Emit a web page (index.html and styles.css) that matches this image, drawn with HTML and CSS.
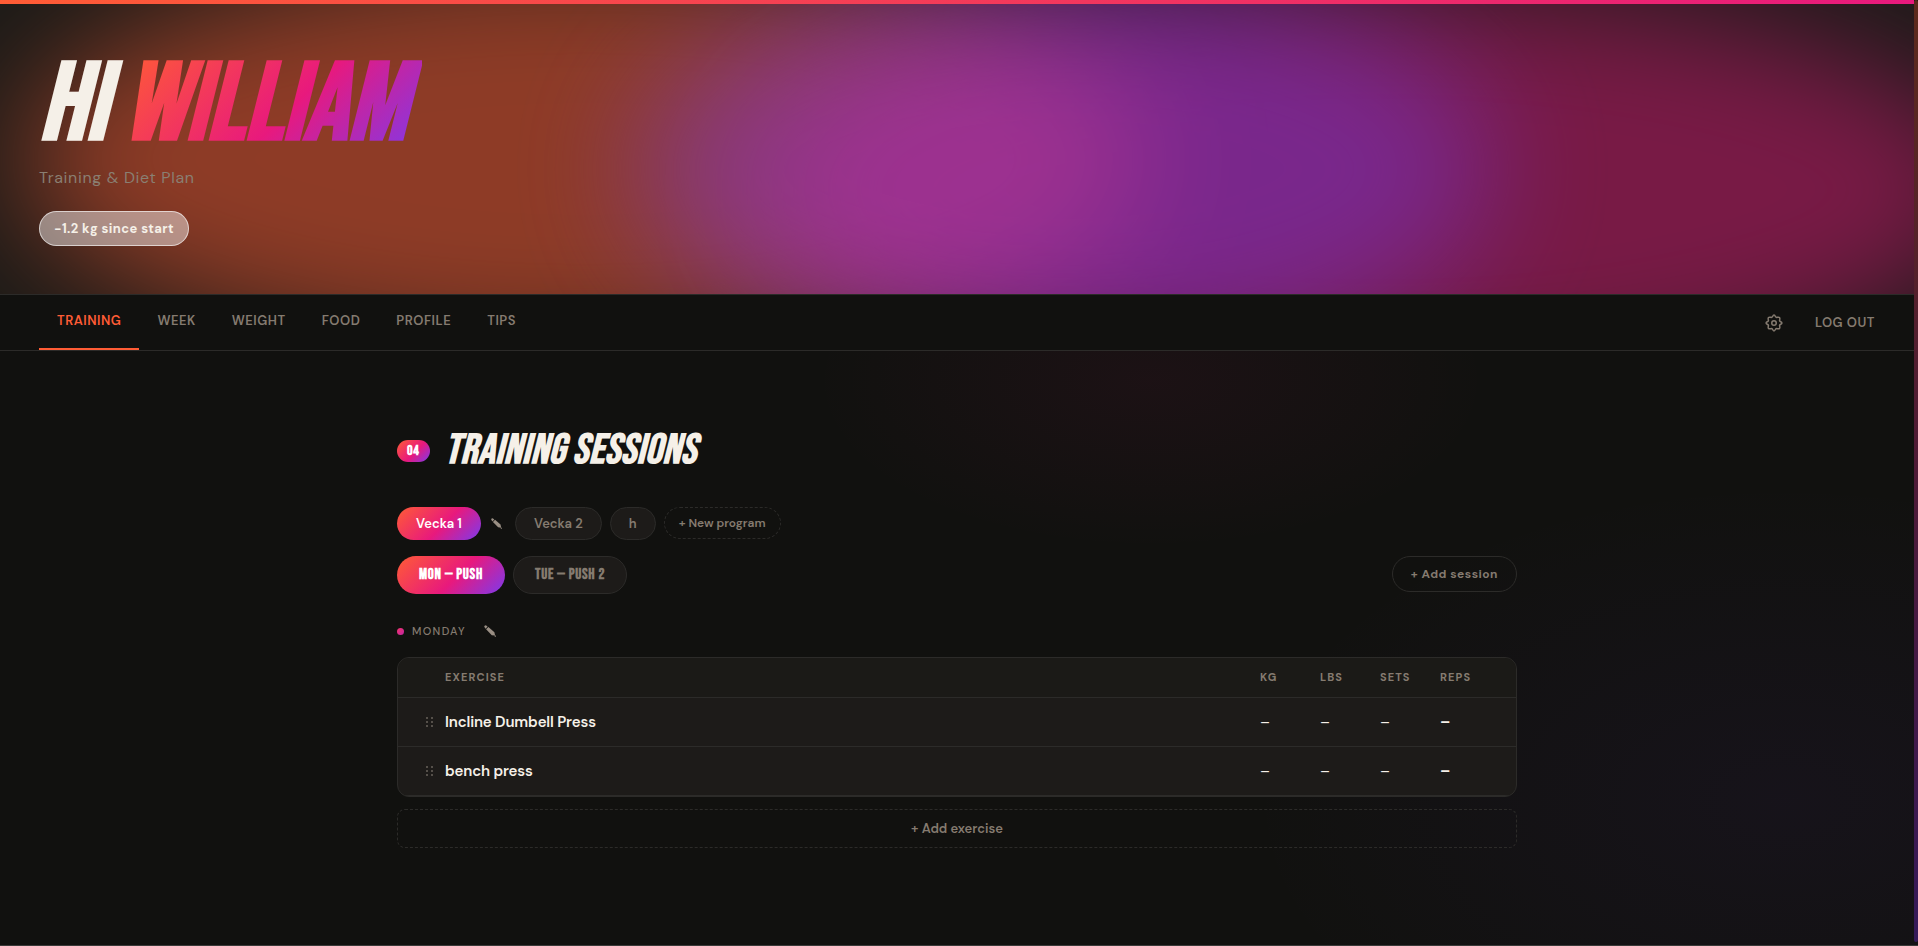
FILE: index.html
```html
<!DOCTYPE html>
<html lang="en">
<head>
	<meta charset="UTF-8">
	<meta name="viewport" content="width=device-width, initial-scale=1">
	<title>Training &amp; Diet Plan</title>
	<link rel="stylesheet" href="styles.css">
</head>
<body>
	<svg class="sprite" aria-hidden="true">
		<symbol id="pencil" viewBox="0 0 12 12">
			<path d="M.2 1.8Q.2.2 1.8.2L3.6 1.6 1.6 3.8ZM2.1 4.3 4.4 1.9 10.4 7.2 11.1 10.6 7.8 10.2ZM10.7 10.6h1.2v1.2h-1.2z"/>
		</symbol>
		<symbol id="grip" viewBox="0 0 7 10">
			<path d="M0 0h2v2H0zM5 0h2v2H5zM0 4h2v2H0zM5 4h2v2H5zM0 8h2v2H0zM5 8h2v2H5z"/>
		</symbol>
	</svg>

	<header class="hero">
		<div class="blobs" aria-hidden="true">
			<span class="blob orange"></span>
			<span class="blob pink"></span>
			<span class="blob violet"></span>
		</div>
		<div class="hero-content">
			<h1>Hi <span class="name">William</span></h1>
			<p class="tagline">Training &amp; Diet Plan</p>
			<span class="badge">−1.2 kg since start</span>
		</div>
	</header>

	<nav class="nav" aria-label="Main">
		<div class="tabs">
			<a class="tab active" href="#training" aria-current="page">Training</a>
			<a class="tab" href="#week">Week</a>
			<a class="tab" href="#weight">Weight</a>
			<a class="tab" href="#food">Food</a>
			<a class="tab" href="#profile">Profile</a>
			<a class="tab" href="#tips">Tips</a>
		</div>
		<div class="nav-actions">
			<button class="icon-btn" type="button" aria-label="Settings">
				<svg class="gear" viewBox="0 0 24 24" width="18" height="18">
					<path d="M10 3.6 Q12 -.8 14 3.6 Q14.8 5 16.4 4.4 Q20.6 3.4 19.6 7.6 Q19 9.2 20.4 10 Q24.8 12 20.4 14 Q19 14.8 19.6 16.4 Q20.6 20.6 16.4 19.6 Q14.8 19 14 20.4 Q12 24.8 10 20.4 Q9.2 19 7.6 19.6 Q3.4 20.6 4.4 16.4 Q5 14.8 3.6 14 Q-.8 12 3.6 10 Q5 9.2 4.4 7.6 Q3.4 3.4 7.6 4.4 Q9.2 5 10 3.6Z"/>
					<circle cx="12" cy="12" r="3"/>
				</svg>
			</button>
			<button class="logout" type="button">Log out</button>
		</div>
	</nav>

	<main class="page" id="training">
		<div class="section-head">
			<span class="section-num">04</span>
			<h2>Training sessions</h2>
		</div>

		<div class="programs">
			<button class="pill active" type="button">Vecka 1</button>
			<button class="edit-btn" type="button" aria-label="Rename program"><svg class="pencil" width="11" height="11"><use href="#pencil"/></svg></button>
			<button class="pill" type="button">Vecka 2</button>
			<button class="pill" type="button">h</button>
			<button class="pill new" type="button">+ New program</button>
		</div>

		<div class="sessions">
			<button class="session active" type="button">Mon — Push</button>
			<button class="session" type="button">Tue — Push 2</button>
			<button class="add-session" type="button">+ Add session</button>
		</div>

		<div class="day">
			<span class="dot"></span>
			<h3>Monday</h3>
			<button class="edit-btn" type="button" aria-label="Edit session"><svg class="pencil" width="12" height="12"><use href="#pencil"/></svg></button>
		</div>

		<div class="card">
			<table>
				<thead>
					<tr>
						<th class="grip-col"></th>
						<th>Exercise</th>
						<th class="num">Kg</th>
						<th class="num">Lbs</th>
						<th class="num">Sets</th>
						<th class="num last">Reps</th>
					</tr>
				</thead>
				<tbody>
					<tr>
						<td class="grip-col"><svg class="grip" width="7" height="10"><use href="#grip"/></svg></td>
						<td class="exercise">Incline Dumbell Press</td>
						<td>–</td>
						<td>–</td>
						<td>–</td>
						<td class="reps">–</td>
					</tr>
					<tr>
						<td class="grip-col"><svg class="grip" width="7" height="10"><use href="#grip"/></svg></td>
						<td class="exercise">bench press</td>
						<td>–</td>
						<td>–</td>
						<td>–</td>
						<td class="reps">–</td>
					</tr>
				</tbody>
			</table>
		</div>
		<button class="add-exercise" type="button">+ Add exercise</button>
	</main>
	<div class="scroll-thumb" aria-hidden="true"></div>
</body>
</html>
```
FILE: styles.css
```css
:root {
	--bg: #11110f;
	--surface: #1d1b19;
	--border: #2c2b29;
	--text: #f5f0e8;
	--muted: #857b70;
	--accent: #ff5c35;
	--gradient: linear-gradient(135deg, #ff5c35 0%, #e8197d 55%, #7c3aed 100%);
	--body-font: "DM Sans", Inter, "Noto Sans", sans-serif;
	--display-font: "Bebas Neue", "Liberation Sans Narrow", "DejaVu Sans Condensed", sans-serif;
}

* {
	box-sizing: border-box;
}

body {
	margin: 0;
	padding-right: 4px;
	min-height: 100vh;
	font-family: var(--body-font);
	color: var(--text);
	background:
		radial-gradient(ellipse 340px 170px at 60% 380px, rgba(232, 25, 125, 0.05), transparent),
		radial-gradient(ellipse 540px 320px at 93% 800px, rgba(124, 58, 237, 0.05), transparent),
		var(--bg);
	border-bottom: 1px solid #3a3a39;
}

h1, h2, h3, p {
	margin: 0;
}

button {
	font-family: inherit;
	color: var(--muted);
	background: none;
	border: 0;
	padding: 0;
	cursor: pointer;
}

.sprite {
	display: none;
}

/* Hero */
.hero {
	position: relative;
	overflow: hidden;
	padding: 49px 39px 48px;
	background: #1c1b18;
	border-top: 4px solid;
	border-image: linear-gradient(90deg, #ff5c35, #e8197d) 1;
	border-bottom: 0;
}

.blobs {
	position: absolute;
	inset: 0;
}

.blob {
	position: absolute;
	border-radius: 50%;
	filter: blur(60px);
}

.orange {
	left: 1%;
	top: -45px;
	width: 59%;
	height: 400px;
	background: #ff5c35;
	opacity: 0.5;
}

.violet {
	left: 33%;
	top: -30px;
	width: 45%;
	height: 390px;
	background: #7c3aed;
	opacity: 0.42;
}

.pink {
	left: 40%;
	top: -20px;
	width: 64%;
	height: 410px;
	background: #e8197d;
	opacity: 0.45;
}

.hero-content {
	position: relative;
	display: flex;
	flex-direction: column;
	align-items: flex-start;
}

h1 {
	font: italic 700 110px/106px var(--display-font);
	text-transform: uppercase;
}

.name {
	display: inline-block;
	color: transparent;
	background: linear-gradient(135deg, #ff5c35 0%, #e8197d 55%, #7c3aed 100%);
	background-clip: text;
	-webkit-background-clip: text;
	padding-right: 16px;
}

.tagline {
	margin-top: 5px;
	font-size: 16px;
	line-height: 28px;
	letter-spacing: 0.04em;
	color: #8a7f72;
}

.badge {
	margin-top: 19px;
	padding: 0 14px;
	font-size: 13px;
	font-weight: 700;
	line-height: 33px;
	letter-spacing: 0.03em;
	background: rgba(255, 255, 255, 0.45);
	border: 1px solid rgba(255, 255, 255, 0.6);
	border-radius: 18px;
}

/* Navigation */
.nav {
	display: flex;
	justify-content: space-between;
	padding: 0 39px;
	background: var(--bg);
	border-top: 1px solid var(--border);
	border-bottom: 1px solid var(--border);
}

.tabs {
	display: flex;
}

.tab {
	padding: 16px 18px 17px;
	font-size: 13px;
	font-weight: 600;
	line-height: 20px;
	letter-spacing: 0.04em;
	text-transform: uppercase;
	text-decoration: none;
	color: var(--muted);
	border-bottom: 2px solid transparent;
}

.tab.active {
	color: var(--accent);
	border-color: var(--accent);
}

.nav-actions {
	display: flex;
	align-items: center;
	gap: 32px;
}

.icon-btn {
	display: flex;
}

.gear {
	fill: none;
	stroke: currentColor;
	stroke-width: 2;
}

.logout {
	font-size: 13px;
	font-weight: 600;
	letter-spacing: 0.04em;
	text-transform: uppercase;
}

/* Page */
.page {
	max-width: 1200px;
	margin: 0 auto;
	padding: 75px 40px 96px;
}

.section-head {
	display: flex;
	align-items: center;
	gap: 15px;
}

.section-num {
	padding: 0 10px;
	font: 700 14px/22px var(--display-font);
	letter-spacing: 0.05em;
	color: #fff;
	background: var(--gradient);
	border-radius: 11px;
}

h2 {
	font: italic 700 42px/50px var(--display-font);
	letter-spacing: 0.01em;
	text-transform: uppercase;
}

.programs {
	display: flex;
	align-items: flex-start;
	gap: 8px;
	margin-top: 31px;
}

.pill {
	padding: 0 18px;
	font-size: 13px;
	font-weight: 600;
	line-height: 31px;
	background: var(--surface);
	border: 1px solid var(--border);
	border-radius: 18px;
}

.pill.active {
	color: #fff;
	background: var(--gradient) border-box;
	border-color: transparent;
}

.pill.new {
	padding: 0 14px;
	font-size: 12px;
	line-height: 30px;
	background: none;
	border-style: dashed;
}

.edit-btn {
	display: flex;
	align-self: center;
	padding: 0 5px 0 2px;
}

.pencil {
	fill: #9a8f84;
}

.sessions {
	display: flex;
	align-items: flex-start;
	gap: 8px;
	margin-top: 16px;
}

.session {
	padding: 0 21px;
	font: 700 15px/36px var(--display-font);
	letter-spacing: 0.05em;
	text-transform: uppercase;
	background: var(--surface);
	border: 1px solid var(--border);
	border-radius: 20px;
}

.session.active {
	color: #fff;
	background: var(--gradient) border-box;
	border-color: transparent;
}

.add-session {
	margin-left: auto;
	padding: 0 18px;
	font-size: 12px;
	font-weight: 700;
	line-height: 34px;
	letter-spacing: 0.04em;
	border: 1px solid var(--border);
	border-radius: 18px;
}

.day {
	display: flex;
	align-items: center;
	margin-top: 28px;
}

.dot {
	width: 7px;
	height: 7px;
	margin-right: 8px;
	background: linear-gradient(135deg, #f5336b, #c026a3);
	border-radius: 50%;
}

h3 {
	margin-right: 16px;
	font-size: 11px;
	font-weight: 500;
	line-height: 18px;
	letter-spacing: 0.12em;
	text-transform: uppercase;
	color: var(--muted);
}

/* Exercise table */
.card {
	margin-top: 17px;
	overflow: hidden;
	background: var(--surface);
	border: 1px solid var(--border);
	border-radius: 12px;
}

table {
	width: 100%;
	border-collapse: separate;
	border-spacing: 0;
	table-layout: fixed;
}

th,
td {
	padding: 0;
	text-align: left;
	border-bottom: 1px solid var(--border);
}

th {
	font-size: 11px;
	font-weight: 700;
	line-height: 39px;
	letter-spacing: 0.1em;
	text-transform: uppercase;
	color: var(--muted);
	background: #1b1a17;
}

td {
	font-size: 15px;
	line-height: 48px;
}

.grip-col {
	width: 47px;
	padding-left: 28px;
}

.num {
	width: 60px;
}

.last {
	width: 76px;
}

.exercise {
	font-weight: 600;
	letter-spacing: -0.01em;
}

.reps {
	font-weight: 700;
}

.grip {
	display: block;
	fill: #55504a;
}

.add-exercise {
	width: 100%;
	margin-top: 12px;
	font-size: 13px;
	font-weight: 600;
	line-height: 37px;
	border: 1px dashed var(--border);
	border-radius: 8px;
}

.scroll-thumb {
	position: fixed;
	top: 0;
	right: 0;
	bottom: 4px;
	width: 4px;
	background: linear-gradient(#5c2a1c, #4f1a36 50%, #351a5a);
	border-radius: 2px;
}
```
